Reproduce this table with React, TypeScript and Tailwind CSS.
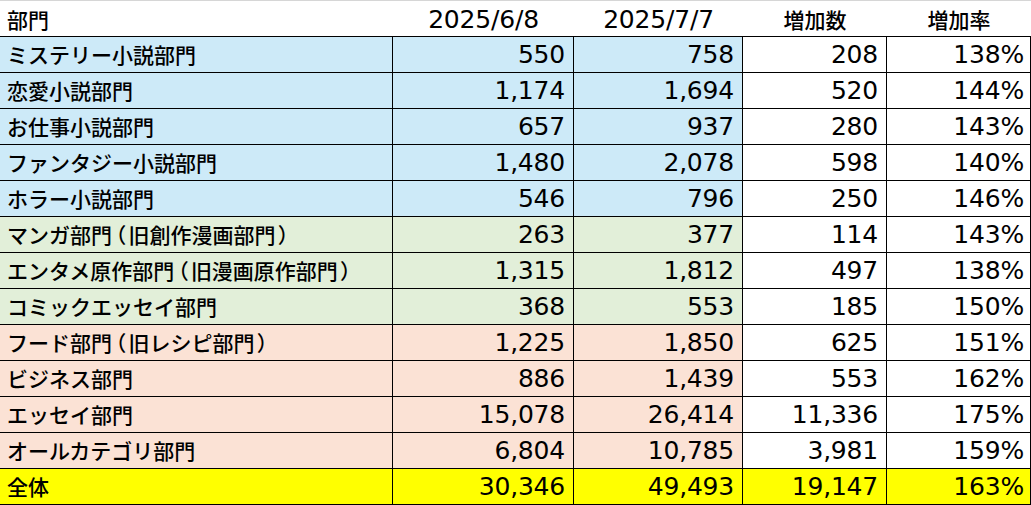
const rows = [
  { name: 'ミステリー小説部門', a: '550', b: '758', inc: '208', rate: '138%', tone: 'blue' },
  { name: '恋愛小説部門', a: '1,174', b: '1,694', inc: '520', rate: '144%', tone: 'blue' },
  { name: 'お仕事小説部門', a: '657', b: '937', inc: '280', rate: '143%', tone: 'blue' },
  { name: 'ファンタジー小説部門', a: '1,480', b: '2,078', inc: '598', rate: '140%', tone: 'blue' },
  { name: 'ホラー小説部門', a: '546', b: '796', inc: '250', rate: '146%', tone: 'blue' },
  { name: 'マンガ部門（旧創作漫画部門）', a: '263', b: '377', inc: '114', rate: '143%', tone: 'green' },
  { name: 'エンタメ原作部門（旧漫画原作部門）', a: '1,315', b: '1,812', inc: '497', rate: '138%', tone: 'green' },
  { name: 'コミックエッセイ部門', a: '368', b: '553', inc: '185', rate: '150%', tone: 'green' },
  { name: 'フード部門（旧レシピ部門）', a: '1,225', b: '1,850', inc: '625', rate: '151%', tone: 'pink' },
  { name: 'ビジネス部門', a: '886', b: '1,439', inc: '553', rate: '162%', tone: 'pink' },
  { name: 'エッセイ部門', a: '15,078', b: '26,414', inc: '11,336', rate: '175%', tone: 'pink' },
  { name: 'オールカテゴリ部門', a: '6,804', b: '10,785', inc: '3,981', rate: '159%', tone: 'pink' },
];

const toneBg: Record<string, string> = {
  blue: 'bg-[#cdeaf8]',
  green: 'bg-[#e2efd9]',
  pink: 'bg-[#fbe2d5]',
};

const jp = "font-['Noto_Sans_CJK_JP',sans-serif] text-[21px] font-medium";
const num = "font-['DejaVu_Sans',sans-serif] text-[25px] tracking-[-0.2px]";
const cols = 'grid grid-cols-[393px_181px_169px_144px_144px]';

// full-width brackets are set proportional so they sit close like in the sheet
function Name({ text }: { text: string }) {
  const parts = text.split(/([（）])/);
  return (
    <>
      {parts.map((p, i) =>
        p === '（' || p === '）' ? (
          <span key={i} className="[font-feature-settings:'palt'] px-[3px]">{p}</span>
        ) : (
          <span key={i}>{p}</span>
        )
      )}
    </>
  );
}

function Row({ name, a, b, inc, rate, bg, plainBg }: { name: string; a: string; b: string; inc: string; rate: string; bg: string; plainBg: string }) {
  const cell = 'h-[36px] border-r border-b border-black flex items-center';
  return (
    <div className={cols}>
      <div className={`${cell} ${bg} ${jp} pl-[7px] whitespace-nowrap`}><Name text={name} /></div>
      <div className={`${cell} ${bg} ${num} justify-end pr-[8px]`}>{a}</div>
      <div className={`${cell} ${bg} ${num} justify-end pr-[8px]`}>{b}</div>
      <div className={`${cell} ${plainBg} ${num} justify-end pr-[8px]`}>{inc}</div>
      <div className={`${cell} ${plainBg} ${num} justify-end pr-[6px]`}>{rate}</div>
    </div>
  );
}

export default function App() {
  return (
    <div className="w-[1031px] h-[505px] bg-white text-black overflow-hidden">
      {/* header */}
      <div className={`${cols} h-[37px] border-t border-b border-t-[#d6d6d6] border-b-black`}>
        <div className={`${jp} flex items-center pl-[7px]`}>部門</div>
        <div className={`${num} flex items-center justify-center`}>2025/6/8</div>
        <div className={`${num} flex items-center justify-center`}>2025/7/7</div>
        <div className={`${jp} flex items-center justify-center`}>増加数</div>
        <div className={`${jp} flex items-center justify-center`}>増加率</div>
      </div>

      {rows.map((r) => (
        <Row key={r.name} {...r} bg={toneBg[r.tone]} plainBg="bg-white" />
      ))}

      <Row name="全体" a="30,346" b="49,493" inc="19,147" rate="163%" bg="bg-[#ffff00]" plainBg="bg-[#ffff00]" />
    </div>
  );
}
